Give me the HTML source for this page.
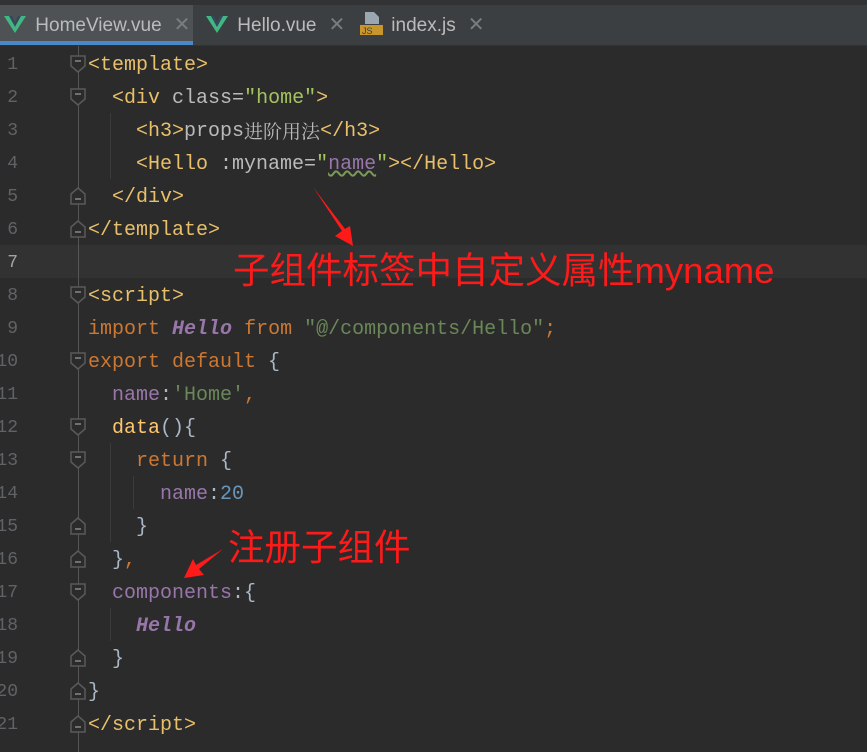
<!DOCTYPE html>
<html><head><meta charset="utf-8"><style>
body{margin:0;width:867px;height:752px;background:#2b2b2b;overflow:hidden;position:relative;font-family:"Liberation Mono",monospace}
.top{position:absolute;left:0;top:0;width:867px;height:5px;background:#313335}
.tabs{position:absolute;left:0;top:5px;width:867px;height:40px;background:#3c3f41;border-bottom:1px solid #323232}
.tab{position:absolute;top:0;height:40px;font:19px "Liberation Sans",sans-serif;color:#bbbbbb;line-height:40px}
.x{color:#7a7d80;margin-left:12px;font-size:20px}
.ln{position:absolute;left:-22px;width:40px;text-align:right;color:#606366;font-size:18px;line-height:33px}
.code{position:absolute;left:88px;font-size:20px;line-height:33px;white-space:pre;color:#a9b7c6}
.t{color:#e8bf6a}.a{color:#bababa}.s{color:#a5c261}.s2{color:#6a8759}.k{color:#cc7832}.h{color:#9876aa;font-style:italic;font-weight:bold}.p{color:#9876aa}.n{color:#6897bb}.f{color:#ffc66d}.b{color:#a9b7c6}
.g{position:absolute;width:1px;background:#3b3b3b}
.red{position:absolute;color:#ff1a1a;font-family:"Liberation Sans","Noto Sans CJK SC",sans-serif;font-size:36.5px;line-height:40px;white-space:nowrap}
.cjk{font-family:'Noto Serif CJK SC',serif;font-size:19px;line-height:20px;display:inline-block;vertical-align:top;margin-top:6px}
</style></head><body>
<div class="top"></div>
<div class="tabs">
 <div style="position:absolute;left:0;top:0;width:193px;height:40px;background:#4e5254"></div>
 <div style="position:absolute;left:0;top:36px;width:193px;height:4px;background:#4a88c7"></div>
 <div class="tab" style="left:4px"><svg width="22" height="18" style="vertical-align:-2px"><path d="M0 1h5l6 11 6-11h5l-11 17z" fill="#41b883"/><path d="M5 1h3l3 6 3-6h3l-6 10z" fill="#34495e"/></svg> <span style="margin-left:4px">HomeView.vue</span><span class="x">✕</span></div>
 <div class="tab" style="left:206px"><svg width="22" height="18" style="vertical-align:-2px"><path d="M0 1h5l6 11 6-11h5l-11 17z" fill="#41b883"/><path d="M5 1h3l3 6 3-6h3l-6 10z" fill="#34495e"/></svg> <span style="margin-left:4px">Hello.vue</span><span class="x">✕</span></div>
 <div class="tab" style="left:360px"><svg width="24" height="24" style="vertical-align:-5px"><path d="M5 0h9l5 5v7H5z" fill="#9aa7b0"/><rect x="0" y="13" width="23" height="10" fill="#c9962e"/><text x="2" y="22" font-size="9" font-family="Liberation Sans" fill="#3c3f41">JS</text></svg> <span style="margin-left:2px">index.js</span><span class="x">✕</span></div>
</div>
<div style="position:absolute;left:0;top:245px;width:867px;height:33px;background:#323232"></div>
<div style="position:absolute;left:78px;top:46px;width:1px;height:706px;background:#555"></div>
<div class="g" style="left:110px;top:113px;height:66px"></div>
<div class="g" style="left:110px;top:443px;height:99px"></div>
<div class="g" style="left:133px;top:476px;height:33px"></div>
<div class="g" style="left:110px;top:608px;height:33px"></div>
<div style="position:absolute;left:0;top:49px;width:100px">
<div class="ln" style="top:0">1</div><div class="ln" style="top:33px">2</div><div class="ln" style="top:66px">3</div><div class="ln" style="top:99px">4</div><div class="ln" style="top:132px">5</div><div class="ln" style="top:165px">6</div><div class="ln" style="top:198px;color:#a4a3a3">7</div><div class="ln" style="top:231px">8</div><div class="ln" style="top:264px">9</div><div class="ln" style="top:297px">10</div><div class="ln" style="top:330px">11</div><div class="ln" style="top:363px">12</div><div class="ln" style="top:396px">13</div><div class="ln" style="top:429px">14</div><div class="ln" style="top:462px">15</div><div class="ln" style="top:495px">16</div><div class="ln" style="top:528px">17</div><div class="ln" style="top:561px">18</div><div class="ln" style="top:594px">19</div><div class="ln" style="top:627px">20</div><div class="ln" style="top:660px">21</div>
</div>
<svg style="position:absolute;left:0;top:0" width="100" height="752">
<defs><g id="d"><path d="M-7 -8h14v10l-7 6-7-6z" fill="#2b2b2b" stroke="#5a5a5a" stroke-width="1.5"/><path d="M-3 -3h6" stroke="#888" stroke-width="1.5"/></g>
<g id="u"><path d="M-7 8h14v-10l-7-6-7 6z" fill="#2b2b2b" stroke="#5a5a5a" stroke-width="1.5"/><path d="M-3 3h6" stroke="#888" stroke-width="1.5"/></g></defs>
<use href="#d" x="78" y="64"/><use href="#d" x="78" y="97"/><use href="#u" x="78" y="196"/><use href="#u" x="78" y="229"/>
<use href="#d" x="78" y="295"/><use href="#d" x="78" y="361"/><use href="#d" x="78" y="427"/><use href="#d" x="78" y="460"/>
<use href="#u" x="78" y="526"/><use href="#u" x="78" y="559"/><use href="#d" x="78" y="592"/><use href="#u" x="78" y="658"/><use href="#u" x="78" y="691"/><use href="#u" x="78" y="724"/>
</svg>
<div class="code" style="top:49px"><span class="t">&lt;template&gt;</span>
  <span class="t">&lt;div</span> <span class="a">class=</span><span class="s">"home"</span><span class="t">&gt;</span>
    <span class="t">&lt;h3&gt;</span><span class="a">props<span class="cjk">进阶用法</span></span><span class="t">&lt;/h3&gt;</span>
    <span class="t">&lt;Hello</span> <span class="a">:myname=</span><span class="s">"</span><span class="p" style="text-decoration:underline wavy #7a9a5a">name</span><span class="s">"</span><span class="t">&gt;&lt;/Hello&gt;</span>
  <span class="t">&lt;/div&gt;</span>
<span class="t">&lt;/template&gt;</span>

<span class="t">&lt;script&gt;</span>
<span class="k">import</span> <span class="h">Hello</span> <span class="k">from</span> <span class="s2">"@/components/Hello"</span><span class="k">;</span>
<span class="k">export default</span> {
  <span class="p">name</span>:<span class="s2">'Home'</span><span class="k">,</span>
  <span class="f">data</span>(){
    <span class="k">return</span> {
      <span class="p">name</span>:<span class="n">20</span>
    }
  }<span class="k">,</span>
  <span class="p">components</span>:{
    <span class="h">Hello</span>
  }
}
<span class="t">&lt;/script&gt;</span></div>
<div class="red" style="left:233px;top:251px">子组件标签中自定义属性myname</div>
<div class="red" style="left:228px;top:528px">注册子组件</div>
<svg style="position:absolute;left:0;top:0" width="867" height="752">
<path d="M313 187 L342 231 L335 236 L353 246 L350 226 L345 229 Z" fill="#ff1a1a"/>
<path d="M223 549 L196 565 L193 559 L184 578 L204 575 L199 569 Z" fill="#ff1a1a"/>
</svg>
</body></html>
